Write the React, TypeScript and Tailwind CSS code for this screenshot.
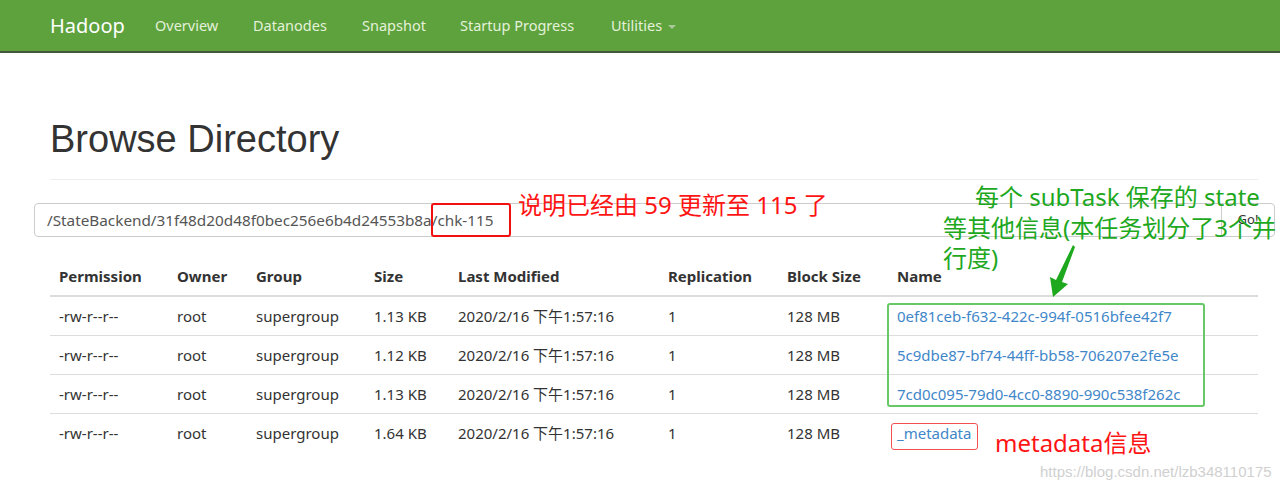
const sans = 'font-["Noto_Sans","Noto_Sans_CJK_SC",sans-serif]'

// nav items with the slot width each one takes in the bar
const navItems = [
  { label: 'Overview', width: 'w-[98px]' },
  { label: 'Datanodes', width: 'w-[109px]' },
  { label: 'Snapshot', width: 'w-[98px]' },
  { label: 'Startup Progress', width: 'w-[151px]' },
]

interface FileRow {
  permission: string
  owner: string
  group: string
  size: string
  modified: string
  replication: string
  blockSize: string
  name: string
}

const rows: FileRow[] = [
  { permission: '-rw-r--r--', owner: 'root', group: 'supergroup', size: '1.13 KB', modified: '2020/2/16 下午1:57:16', replication: '1', blockSize: '128 MB', name: '0ef81ceb-f632-422c-994f-0516bfee42f7' },
  { permission: '-rw-r--r--', owner: 'root', group: 'supergroup', size: '1.12 KB', modified: '2020/2/16 下午1:57:16', replication: '1', blockSize: '128 MB', name: '5c9dbe87-bf74-44ff-bb58-706207e2fe5e' },
  { permission: '-rw-r--r--', owner: 'root', group: 'supergroup', size: '1.13 KB', modified: '2020/2/16 下午1:57:16', replication: '1', blockSize: '128 MB', name: '7cd0c095-79d0-4cc0-8890-990c538f262c' },
  { permission: '-rw-r--r--', owner: 'root', group: 'supergroup', size: '1.64 KB', modified: '2020/2/16 下午1:57:16', replication: '1', blockSize: '128 MB', name: '_metadata' },
]

const cols = 'grid grid-cols-[119px_79px_118px_84px_210px_119px_110px_1fr]'
const headers = ['Permission', 'Owner', 'Group', 'Size', 'Last Modified', 'Replication', 'Block Size', 'Name']

export default function App() {
  return (
    <div className={`relative h-[489px] overflow-hidden bg-white text-[#333] ${sans}`}>
      {/* Navbar */}
      <nav className="flex h-[53px] items-center border-b-2 border-[#45573a] bg-[#5ea23d] pl-[50px]">
        <span className="w-[105px] text-[20px] text-white">Hadoop</span>
        <div className="flex items-center text-[14.5px] text-[#e4f1da]">
          {navItems.map((item) => (
            <span key={item.label} className={item.width}>
              {item.label}
            </span>
          ))}
          <span className="flex items-center">
            Utilities
            <span className="ml-[6px] mt-[2px] h-0 w-0 border-x-[4px] border-t-[4px] border-x-transparent border-t-[#a9c99a]" />
          </span>
        </div>
      </nav>

      {/* Content */}
      <main className="pl-[50px] pr-[22px]">
        <h1 className='mt-[65px] font-["Liberation_Sans",Arial,sans-serif] text-[38px] leading-[42px] text-[#333]'>
          Browse Directory
        </h1>
        <hr className="mt-[19px] border-[#eee]" />

        {/* Path input */}
        <div className="ml-[-16px] mr-[-17px] mt-[23px] flex h-[34px]">
          <div className="flex flex-1 items-center rounded-l-[4px] border border-[#ccc] pl-[12px] text-[15.3px] text-[#555]">
            /StateBackend/31f48d20d48f0bec256e6b4d24553b8a/chk-115
          </div>
          <div className="ml-[-1px] flex w-[54px] items-center justify-center rounded-r-[4px] border border-[#ccc] text-[13px] text-[#333]">
            Go!
          </div>
        </div>

        {/* Table */}
        <div className="mt-[20px] text-[15px]">
          <div className={`${cols} h-[40px] items-center border-b-2 border-[#ddd] font-bold`}>
            {headers.map((h, i) => (
              <div key={h} className={i === 0 ? 'pl-[9px]' : 'pl-[8px]'}>
                {h}
              </div>
            ))}
          </div>
          {rows.map((row, idx) => (
            <div
              key={row.name}
              className={`${cols} h-[39px] items-center ${idx < rows.length - 1 ? 'border-b border-[#ddd]' : ''}`}
            >
              <div className="pl-[9px]">{row.permission}</div>
              <div className="pl-[8px]">{row.owner}</div>
              <div className="pl-[8px]">{row.group}</div>
              <div className="pl-[8px]">{row.size}</div>
              <div className="pl-[8px]">{row.modified}</div>
              <div className="pl-[8px]">{row.replication}</div>
              <div className="pl-[8px]">{row.blockSize}</div>
              <div className="pl-[8px] text-[#3f87c9]">{row.name}</div>
            </div>
          ))}
        </div>
      </main>

      {/* Annotations drawn over the screenshot */}
      <div className="absolute left-[431px] top-[203px] h-[34px] w-[80px] rounded-[3px] border-2 border-[#f01010]" />
      <div className="absolute left-[518px] top-[190px] text-[24px] leading-[30px] text-[#ff1414]">
        说明已经由 59 更新至 115 了
      </div>

      <div className="absolute left-[943px] top-[182px] whitespace-nowrap text-[24px] leading-[30.5px] text-[#1ea81e]">
        <div className="pl-[32px]">每个 subTask 保存的 state</div>
        <div>等其他信息(本任务划分了3个并</div>
        <div>行度)</div>
      </div>

      <svg className="absolute left-[1040px] top-[240px]" width="40" height="60" viewBox="0 0 40 60">
        <path d="M33 5 L35 7 L22 42 L28 44 L13 57 L10 37 L16 40 Z" fill="#1ea81e" />
      </svg>

      <div className="absolute left-[887px] top-[303px] h-[104px] w-[318px] rounded-[3px] border-2 border-[#66c966]" />
      <div className="absolute left-[891px] top-[423px] h-[27px] w-[87px] rounded-[3px] border-[1.5px] border-[#f45050]" />
      <div className="absolute left-[995px] top-[428px] text-[24px] leading-[30px] text-[#ff1414]">
        metadata信息
      </div>

      <div className='absolute left-[1040px] top-[462px] font-["Liberation_Sans",Arial,sans-serif] text-[15px] leading-[20px] text-[#d0d0d0]'>
        https://blog.csdn.net/lzb348110175
      </div>
    </div>
  )
}
